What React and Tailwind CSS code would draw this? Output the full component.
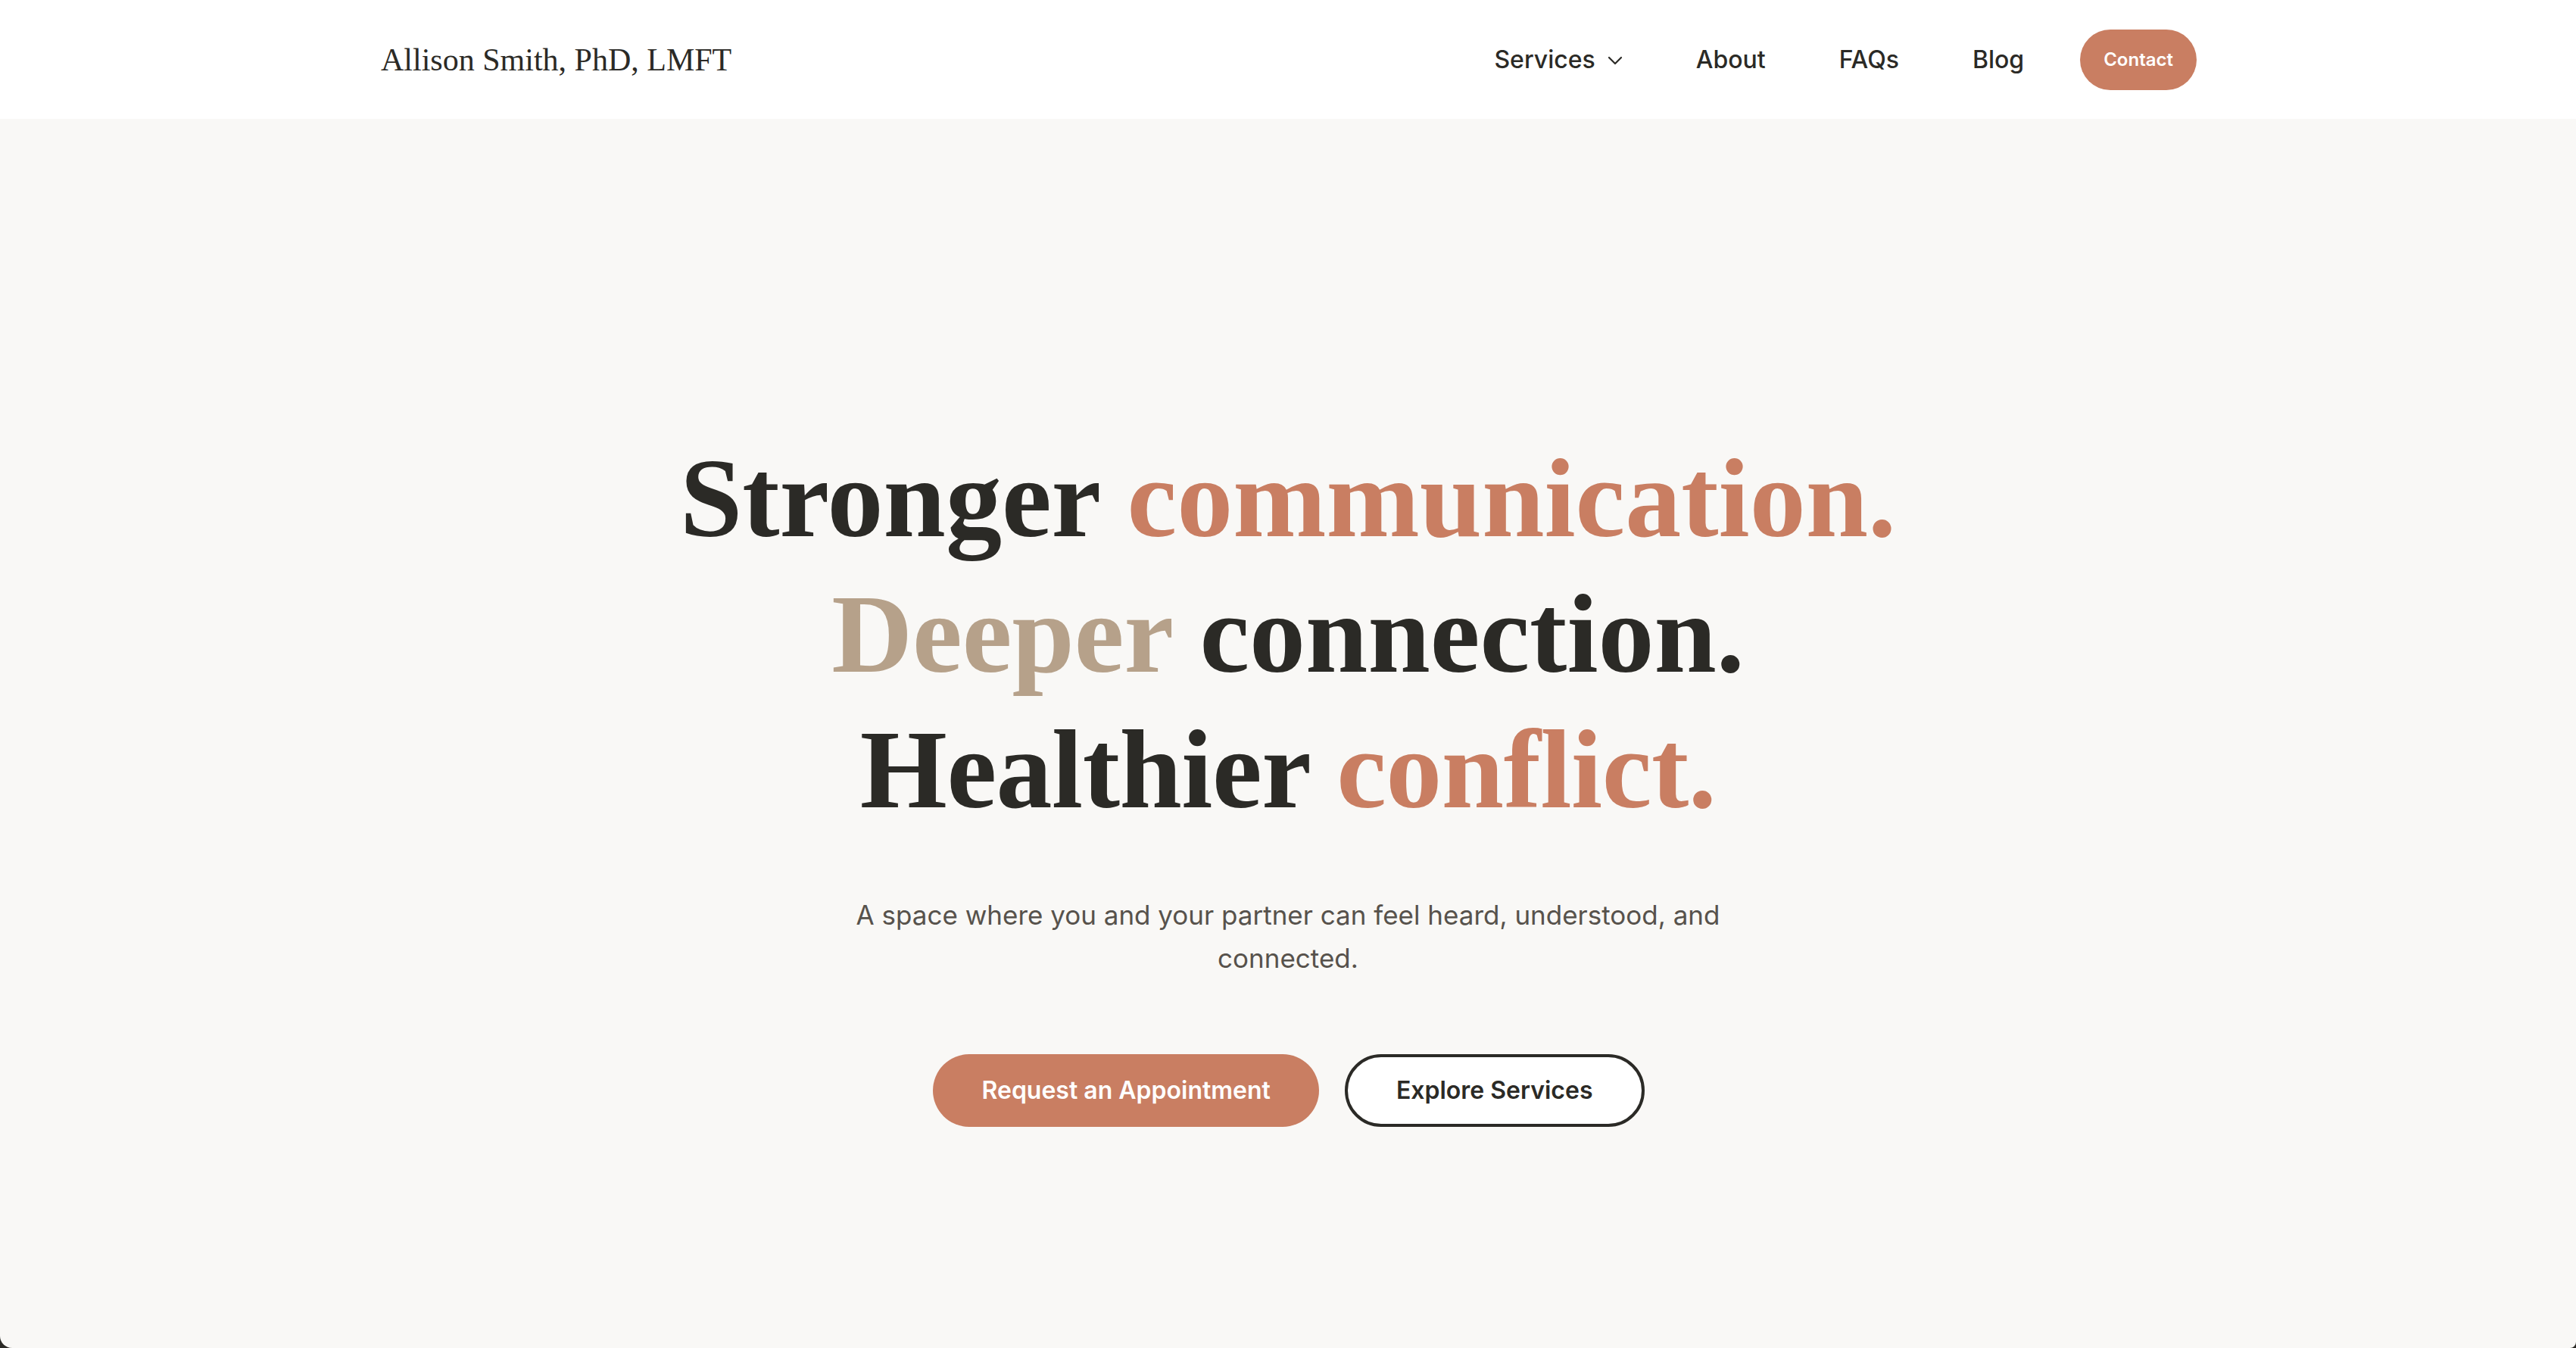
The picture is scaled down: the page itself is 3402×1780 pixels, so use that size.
import React from "react";

function Chevron() {
  return (
    <svg width="20" height="12" viewBox="0 0 20 12" fill="none" className="mt-[2px]">
      <path d="M2 2 L10 10 L18 2" stroke="#2b2a26" strokeWidth="2.2" strokeLinecap="round" strokeLinejoin="round" />
    </svg>
  );
}

export default function App() {
  return (
    <div className="w-full h-[1780px] bg-[#2b2a26] font-['Inter','Liberation_Sans',sans-serif]">
      <div className="h-full flex flex-col bg-[#f9f8f6] rounded-bl-[16px] rounded-br-[8px] overflow-hidden">
        <header className="h-[157px] bg-white shrink-0">
          <div className="w-[2400px] mx-auto h-full flex items-center justify-between">
            <a className="text-[42px] text-[#2b2a26] font-['Liberation_Serif','Times_New_Roman',serif] leading-none pl-[2px]">
              Allison Smith, PhD, LMFT
            </a>
            <nav className="flex items-center">
              <div className="flex items-center gap-[97px] text-[32px] font-medium text-[#2b2a26]">
                <a className="flex items-center gap-[16px] ml-[2px]">
                  Services
                  <Chevron />
                </a>
                <a>About</a>
                <a>FAQs</a>
                <a>Blog</a>
              </div>
              <a className="ml-[74px] h-[80px] px-[31px] rounded-full bg-[#c97e62] text-white text-[24px] font-semibold flex items-center">
                Contact
              </a>
            </nav>
          </div>
        </header>
        <main className="flex-1 flex flex-col items-center pt-[412px]">
          <h1 className="text-center font-bold text-[148px] leading-[179px] text-[#2b2a26] font-['Liberation_Serif','Times_New_Roman',serif]">
            <span className="block">
              Stronger <span className="text-[#c97e62]">communication.</span>
            </span>
            <span className="block">
              <span className="text-[#b6a18a]">Deeper</span> connection.
            </span>
            <span className="block tracking-[-0.5px]">
              Healthier <span className="text-[#c97e62]">conflict.</span>
            </span>
          </h1>
          <p className="mt-[74px] max-w-[1240px] text-center text-[35px] leading-[57px] text-[#57524c]">
            A space where you and your partner can feel heard, understood, and connected.
          </p>
          <div className="mt-[98px] flex items-center gap-[34px] pl-[2px]">
            <a className="h-[96px] px-[64px] rounded-full bg-[#c97e62] text-white text-[32px] font-semibold flex items-center">
              Request an Appointment
            </a>
            <a className="h-[96px] px-[64px] rounded-full bg-white border-[4px] border-[#2b2a26] text-[#2b2a26] text-[32px] font-semibold flex items-center">
              Explore Services
            </a>
          </div>
        </main>
      </div>
    </div>
  );
}
